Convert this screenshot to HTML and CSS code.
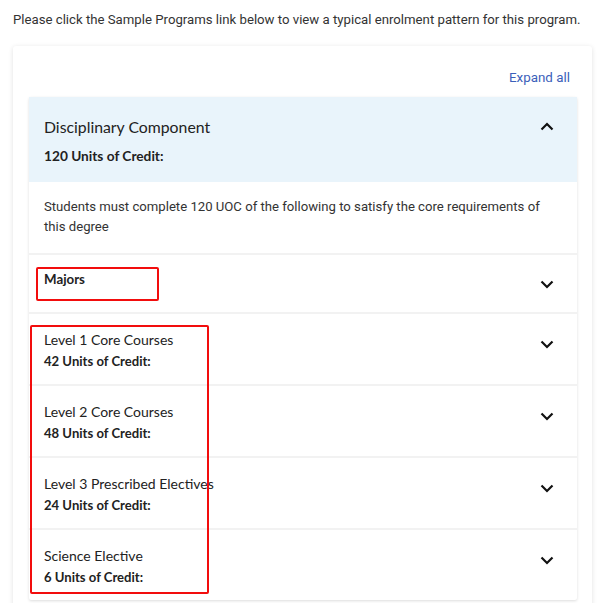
FILE: index.html
```html
<!DOCTYPE html>
<html>
<head>
<meta charset="utf-8">
<link rel="stylesheet" href="styles.css">
</head>
<body>
<div class="page">
  <p class="intro">Please click the Sample Programs link below to view a typical enrolment pattern for this program.</p>
  <div class="card">
    <div class="toolbar"><a class="expand">Expand all</a></div>
    <div class="accordion">
      <div class="head">
        <div class="texts">
          <div class="title big">Disciplinary Component</div>
          <div class="uoc">120 Units of Credit:</div>
        </div>
        <svg class="chev" width="14" height="9" viewBox="0 0 14 9"><polyline points="1.5,7.5 7,2 12.5,7.5" fill="none" stroke="#111" stroke-width="2.2"/></svg>
      </div>
      <div class="body">Students must complete 120 UOC of the following to satisfy the core requirements of this degree</div>
      <div class="row majors">
        <div class="texts"><div class="title bold">Majors</div></div>
        <svg class="chev" width="14" height="9" viewBox="0 0 14 9"><polyline points="1.5,1.5 7,7 12.5,1.5" fill="none" stroke="#111" stroke-width="2.2"/></svg>
      </div>
      <div class="row">
        <div class="texts"><div class="title">Level 1 Core Courses</div><div class="uoc">42 Units of Credit:</div></div>
        <svg class="chev" width="14" height="9" viewBox="0 0 14 9"><polyline points="1.5,1.5 7,7 12.5,1.5" fill="none" stroke="#111" stroke-width="2.2"/></svg>
      </div>
      <div class="row">
        <div class="texts"><div class="title">Level 2 Core Courses</div><div class="uoc">48 Units of Credit:</div></div>
        <svg class="chev" width="14" height="9" viewBox="0 0 14 9"><polyline points="1.5,1.5 7,7 12.5,1.5" fill="none" stroke="#111" stroke-width="2.2"/></svg>
      </div>
      <div class="row">
        <div class="texts"><div class="title">Level 3 Prescribed Electives</div><div class="uoc">24 Units of Credit:</div></div>
        <svg class="chev" width="14" height="9" viewBox="0 0 14 9"><polyline points="1.5,1.5 7,7 12.5,1.5" fill="none" stroke="#111" stroke-width="2.2"/></svg>
      </div>
      <div class="row">
        <div class="texts"><div class="title">Science Elective</div><div class="uoc">6 Units of Credit:</div></div>
        <svg class="chev" width="14" height="9" viewBox="0 0 14 9"><polyline points="1.5,1.5 7,7 12.5,1.5" fill="none" stroke="#111" stroke-width="2.2"/></svg>
      </div>
    </div>
  </div>
  <div class="mark mark-majors"></div>
  <div class="mark mark-levels"></div>
</div>
</body>
</html>
```

FILE: styles.css
```css
* { box-sizing: border-box; }
html, body { margin: 0; background: #fff; }
body { font-family: Roboto, "Liberation Sans", sans-serif; color: #222; }
.page { position: relative; padding: 10px 8px 0 13px; height: 603px; overflow: hidden; }
.intro { margin: 0; font-size: 13.2px; line-height: 20px; color: #333; white-space: nowrap; }
.card {
  margin-top: 16px;
  background: #fff;
  border-radius: 3px;
  box-shadow: 0 1px 5px rgba(0,0,0,0.12);
  padding: 22px 15px 20px 16px;
}
.toolbar { display: flex; justify-content: flex-end; padding-right: 7px; margin-bottom: 9px; }
.expand { font-size: 13.4px; line-height: 20px; color: #3b5fba; cursor: pointer; }
.accordion { background: #fff; box-shadow: 0 1px 3px rgba(0,0,0,0.14); border-radius: 2px; }
.head {
  background: #e9f4fb;
  display: flex; justify-content: space-between; align-items: flex-start;
  padding: 19px 23px 14px 15px;
  height: 85px;
}
.texts { display: flex; flex-direction: column; }
.title { font-family: Lato, "Noto Sans", sans-serif; font-size: 14px; line-height: 20px; color: #222; }
.title.big { font-size: 15.8px; line-height: 22px; }
.title.bold { font-weight: 700; font-size: 13.3px; }
.uoc { font-family: Lato, "Noto Sans", sans-serif; font-weight: 700; font-size: 13.1px; line-height: 20px; margin-top: 1px; color: #222; }
.head .uoc { margin-top: 8px; font-size: 13.7px; }
.head .chev { margin-top: 6px; }
.body {
  font-size: 13.15px; line-height: 20px; color: #333;
  padding: 15px 30px 16px 15px;
}
.row {
  border-top: 2px solid #f2f2f2;
  display: flex; justify-content: space-between; align-items: flex-start;
  padding: 16px 23px 13px 15px;
}
.row.majors { padding-bottom: 23px; padding-top: 14px; }
.row .chev { margin-top: 10px; }
.row.majors .chev { margin-top: 11px; }
.chev { flex: none; }
.mark { position: absolute; border: 2px solid #f20d0d; border-radius: 2px; }
.mark-majors { left: 36px; top: 267px; width: 123px; height: 34px; }
.mark-levels { left: 30px; top: 325px; width: 179px; height: 269px; }
```
